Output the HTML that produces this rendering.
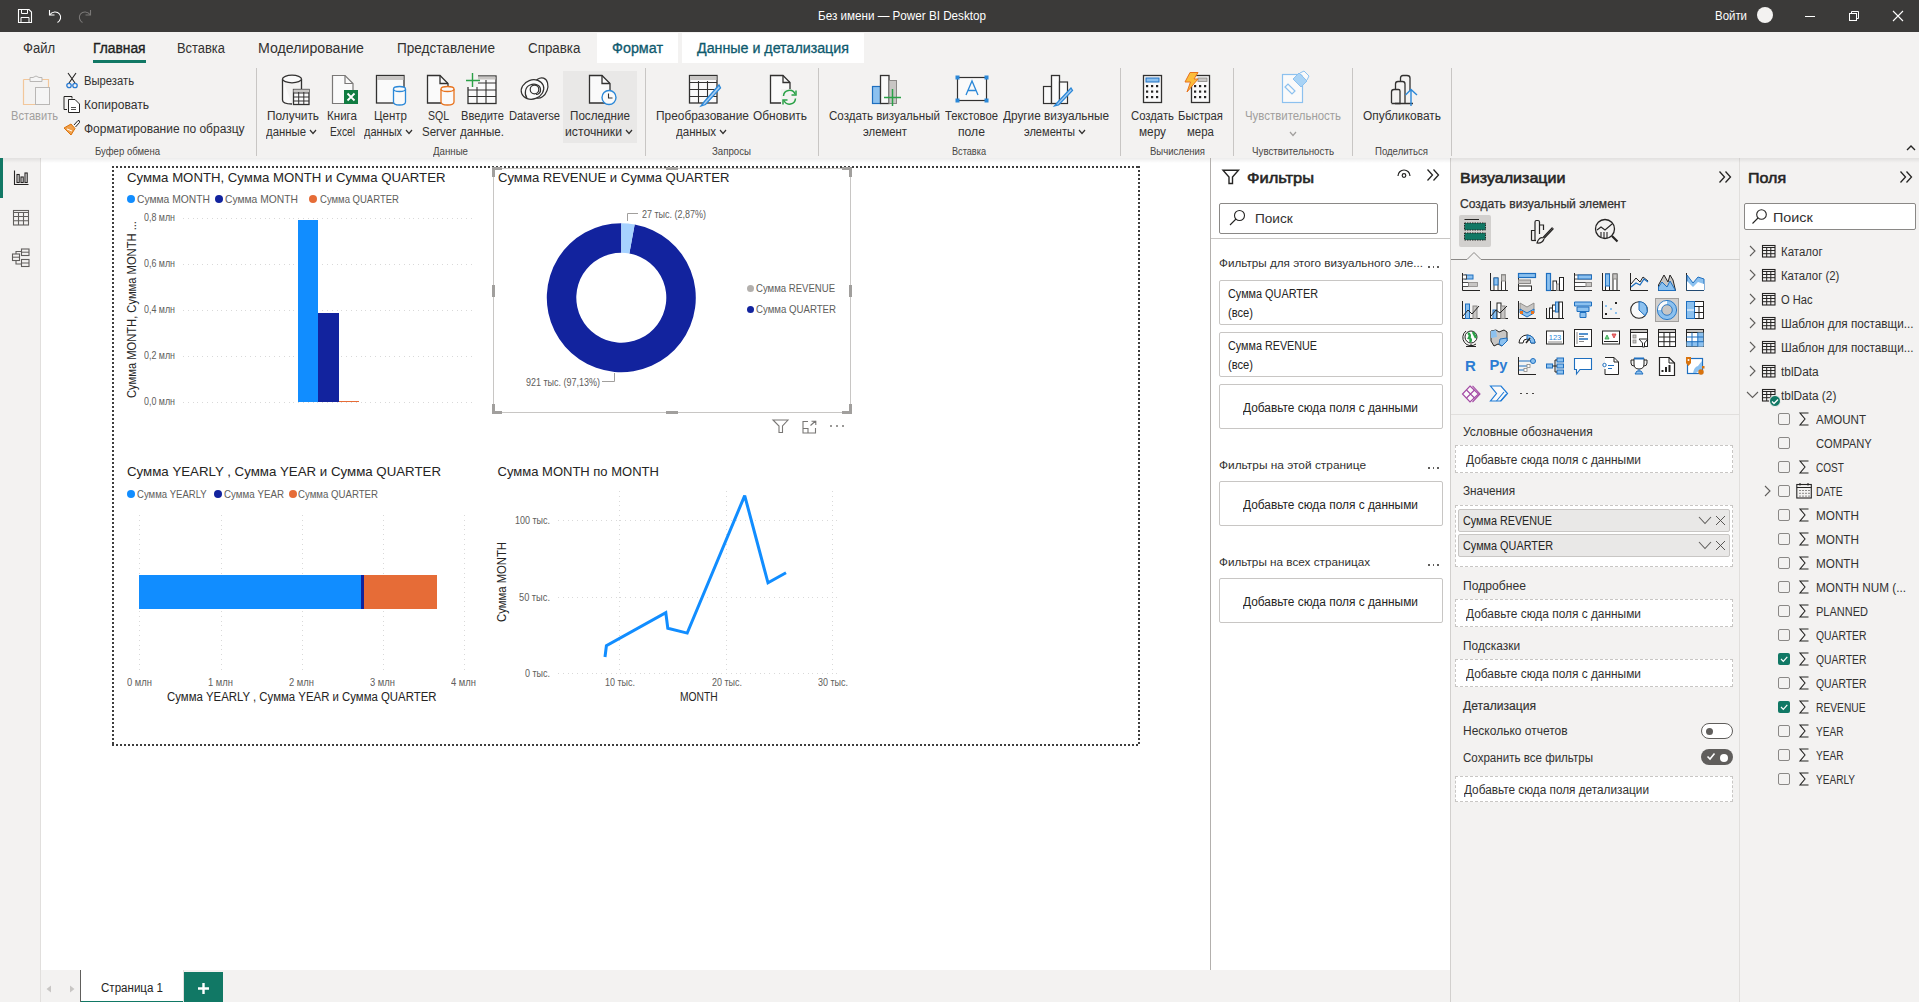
<!DOCTYPE html><html><head><meta charset="utf-8"><style>
html,body{margin:0;padding:0;width:1919px;height:1002px;overflow:hidden;background:#f3f2f1;}
body{position:relative;font-family:"Liberation Sans",sans-serif;}
.t{position:absolute;white-space:nowrap;line-height:1;transform-origin:0 0;}
.r{position:absolute;box-sizing:border-box;}
.s{position:absolute;overflow:visible;}
</style></head><body>
<div class="r" style="left:0px;top:0px;width:1919px;height:32px;background:#3b3a39;"></div>
<svg class="s" style="left:17px;top:8px;" width="16" height="16" viewBox="0 0 16 16"><path d="M1.5,1.5 H12 L14.5,4 V14.5 H1.5 Z" fill="none" stroke="#fff" stroke-width="1.1"/><path d="M4.5,1.5 V5.5 H10.5 V1.5" fill="none" stroke="#fff" stroke-width="1"/><path d="M4,14.5 V9.5 H12 V14.5" fill="none" stroke="#fff" stroke-width="1"/></svg>
<svg class="s" style="left:47px;top:8px;" width="16" height="16" viewBox="0 0 16 16"><path d="M2.5,2 V7 H7.5" fill="none" stroke="#fff" stroke-width="1.1"/><path d="M2.8,6.8 C5,3.5 10,3 12.5,6 C14.8,8.8 13.5,12.5 10.5,14.5" fill="none" stroke="#fff" stroke-width="1.1"/></svg>
<svg class="s" style="left:77px;top:8px;" width="16" height="16" viewBox="0 0 16 16"><path d="M13.5,2 V7 H8.5" fill="none" stroke="#7a7877" stroke-width="1.1"/><path d="M13.2,6.8 C11,3.5 6,3 3.5,6 C1.2,8.8 2.5,12.5 5.5,14.5" fill="none" stroke="#7a7877" stroke-width="1.1"/></svg>
<div class="t" style="left:818.00px;top:9px;font-size:13px;color:#ffffff;transform:scaleX(0.8972);">Без имени — Power BI Desktop</div>
<div class="t" style="left:1715.00px;top:9px;font-size:13px;color:#ffffff;transform:scaleX(0.8797);">Войти</div>
<div class="r" style="left:1757px;top:7px;width:16px;height:16px;border-radius:50%;background:#f3f2f1"></div>
<div class="r" style="left:1805px;top:16px;width:10px;height:1px;background:#ffffff;"></div>
<svg class="s" style="left:1848px;top:10px;" width="12" height="12" viewBox="0 0 12 12"><rect x="1.5" y="3.5" width="7" height="7" fill="none" stroke="#fff" stroke-width="1"/><path d="M3.5,3.5 V1.5 H10.5 V8.5 H8.5" fill="none" stroke="#fff" stroke-width="1"/></svg>
<svg class="s" style="left:1892px;top:10px;" width="12" height="12" viewBox="0 0 12 12"><path d="M1,1 L11,11 M11,1 L1,11" stroke="#fff" stroke-width="1.1"/></svg>
<div class="r" style="left:597px;top:33px;width:81px;height:30px;background:#ffffff;"></div>
<div class="r" style="left:682px;top:33px;width:182px;height:30px;background:#ffffff;"></div>
<div class="t" style="left:23.00px;top:41px;font-size:14px;color:#323130;transform:scaleX(0.9309);">Файл</div>
<div class="t" style="left:93.00px;top:41px;font-size:14px;color:#201f1e;transform:scaleX(0.9859);-webkit-text-stroke:0.35px #201f1e;">Главная</div>
<div class="t" style="left:177.00px;top:41px;font-size:14px;color:#323130;transform:scaleX(0.9209);">Вставка</div>
<div class="t" style="left:258.00px;top:41px;font-size:14px;color:#323130;transform:scaleX(1.0119);">Моделирование</div>
<div class="t" style="left:397.00px;top:41px;font-size:14px;color:#323130;transform:scaleX(0.9703);">Представление</div>
<div class="t" style="left:527.50px;top:41px;font-size:14px;color:#323130;transform:scaleX(0.9545);">Справка</div>
<div class="t" style="left:612.00px;top:41px;font-size:14px;color:#0e5a6e;transform:scaleX(1.0251);-webkit-text-stroke:0.3px #0e5a6e;">Формат</div>
<div class="t" style="left:697.00px;top:41px;font-size:14px;color:#0e5a6e;transform:scaleX(1.0176);-webkit-text-stroke:0.3px #0e5a6e;">Данные и детализация</div>
<div class="r" style="left:93px;top:60px;width:53px;height:3px;background:#117865;"></div>
<div class="r" style="left:0;top:158px;width:1919px;height:5px;background:linear-gradient(rgba(0,0,0,0.075),rgba(0,0,0,0));z-index:5"></div>
<div class="r" style="left:256px;top:68px;width:1px;height:88px;background:#c8c6c4;"></div>
<div class="r" style="left:645px;top:68px;width:1px;height:88px;background:#c8c6c4;"></div>
<div class="r" style="left:818px;top:68px;width:1px;height:88px;background:#c8c6c4;"></div>
<div class="r" style="left:1120px;top:68px;width:1px;height:88px;background:#c8c6c4;"></div>
<div class="r" style="left:1233px;top:68px;width:1px;height:88px;background:#c8c6c4;"></div>
<div class="r" style="left:1352px;top:68px;width:1px;height:88px;background:#c8c6c4;"></div>
<div class="r" style="left:1451px;top:68px;width:1px;height:88px;background:#c8c6c4;"></div>
<svg class="s" style="left:22px;top:74px;" width="30" height="32" viewBox="0 0 30 32"><path d="M1.5,5.5 H8 M20,5.5 H26.5 V19" fill="none" stroke="#f2c79b" stroke-width="1.2"/><path d="M1.5,5.5 V30.5 H14" fill="none" stroke="#f2c79b" stroke-width="1.2"/><path d="M8,7.5 V3.5 H11 Q14,0.5 17,3.5 H20 V7.5 Z" fill="#f5f5f5" stroke="#b9b7b5" stroke-width="1"/><rect x="13.5" y="13.5" width="14" height="17" fill="#f5f5f5" stroke="#b9b7b5" stroke-width="1"/></svg>
<div class="t" style="left:10.50px;top:110px;font-size:12px;color:#a19f9d;transform:scaleX(0.9238);">Вставить</div>
<svg class="s" style="left:66px;top:72px;" width="12" height="17" viewBox="0 0 12 17"><path d="M2,1 L9,11 M10,1 L3,11" stroke="#252423" stroke-width="1.1"/><circle cx="3" cy="13.5" r="2.2" fill="none" stroke="#2b7cd3" stroke-width="1.3"/><circle cx="9" cy="13.5" r="2.2" fill="none" stroke="#2b7cd3" stroke-width="1.3"/></svg>
<div class="t" style="left:84.00px;top:75px;font-size:12px;color:#323130;transform:scaleX(0.9368);">Вырезать</div>
<svg class="s" style="left:63px;top:96px;" width="18" height="17" viewBox="0 0 18 17"><path d="M9,2.5 V0.5 H1 V13.5 H4" fill="none" stroke="#252423" stroke-width="1"/><path d="M5.5,3.5 H12 L16.5,8 V16.5 H5.5 Z" fill="#fff" stroke="#252423" stroke-width="1"/><path d="M8,11.5 H13 M8,13.5 H13" stroke="#252423" stroke-width="0.8"/></svg>
<div class="t" style="left:84.00px;top:99px;font-size:12px;color:#323130;transform:scaleX(1.0058);">Копировать</div>
<svg class="s" style="left:63px;top:119px;" width="18" height="17" viewBox="0 0 18 17"><path d="M11,6 L15,1.5 Q17,1 16.5,3.5 L12.5,8" fill="none" stroke="#252423" stroke-width="1"/><path d="M1,9 L8,5 L12,9.5 L8,16 Z" fill="#f0a04b" stroke="#d9730d" stroke-width="1"/><path d="M4,10 L9,12" stroke="#fff" stroke-width="1"/></svg>
<div class="t" style="left:84.00px;top:123px;font-size:12px;color:#323130;">Форматирование по образцу</div>
<div class="t" style="left:95.00px;top:146px;font-size:11px;color:#484644;transform:scaleX(0.8696);">Буфер обмена</div>
<svg class="s" style="left:281px;top:74px;" width="30" height="32" viewBox="0 0 30 32"><path d="M1.5,5 V26 Q1.5,30 11,30 M20.5,5 V16" fill="#fafafa" stroke="#323130" stroke-width="1.3"/><ellipse cx="11" cy="5" rx="9.5" ry="3.8" fill="#fafafa" stroke="#323130" stroke-width="1.3"/><rect x="12.5" y="15.5" width="15.5" height="15" fill="#fafafa" stroke="#323130" stroke-width="1.3"/><rect x="12.5" y="15.5" width="15.5" height="3" fill="#c8c6c4"/><path d="M12.5,19 H28 M12.5,23 H28 M12.5,27 H28 M17.7,18 V30.5 M22.8,18 V30.5" stroke="#323130" stroke-width="1"/></svg>
<div class="t" style="left:267.00px;top:110px;font-size:12px;color:#323130;transform:scaleX(0.9858);">Получить</div>
<div class="t" style="left:266.00px;top:126px;font-size:12px;color:#323130;transform:scaleX(0.9467);">данные</div>
<svg class="s" style="left:309px;top:129px;" width="8" height="5.5" viewBox="0 0 8 5.5"><polyline points="1,1 4.0,4.5 7,1" fill="none" stroke="#323130" stroke-width="1.2"/></svg>
<svg class="s" style="left:331px;top:74px;" width="30" height="32" viewBox="0 0 30 32"><path d="M1.5,1.5 H14 L22,9.5 V29.5 H1.5 Z" fill="#fafafa" stroke="#7a7877" stroke-width="1.2"/><path d="M14,1.5 V9.5 H22" fill="none" stroke="#7a7877" stroke-width="1.2"/><rect x="13" y="16" width="14" height="14" fill="#107c41"/><path d="M16.5,19.5 L23.5,26.5 M23.5,19.5 L16.5,26.5" stroke="#fff" stroke-width="1.8"/></svg>
<div class="t" style="left:327.00px;top:110px;font-size:12px;color:#323130;transform:scaleX(0.9639);">Книга</div>
<div class="t" style="left:330.00px;top:126px;font-size:12px;color:#323130;transform:scaleX(0.8511);">Excel</div>
<svg class="s" style="left:375px;top:74px;" width="33" height="32" viewBox="0 0 33 32"><rect x="1.5" y="1.5" width="27.5" height="27.5" fill="#fafafa" stroke="#323130" stroke-width="1.3"/><rect x="2" y="2" width="26.5" height="4" fill="#c8c6c4"/><path d="M18.5,15 V28 Q18.5,31 24.5,31 Q30.5,31 30.5,28 V15" fill="#fafafa" stroke="#2b88d8" stroke-width="1.3"/><ellipse cx="24.5" cy="15" rx="6" ry="2.5" fill="#fafafa" stroke="#2b88d8" stroke-width="1.3"/></svg>
<div class="t" style="left:374.00px;top:110px;font-size:12px;color:#323130;transform:scaleX(0.9600);">Центр</div>
<div class="t" style="left:364.00px;top:126px;font-size:12px;color:#323130;transform:scaleX(0.9157);">данных</div>
<svg class="s" style="left:405px;top:129px;" width="8" height="5.5" viewBox="0 0 8 5.5"><polyline points="1,1 4.0,4.5 7,1" fill="none" stroke="#323130" stroke-width="1.2"/></svg>
<svg class="s" style="left:426px;top:74px;" width="30" height="32" viewBox="0 0 30 32"><path d="M1.5,1.5 H14 L22,9.5 V29 H1.5 Z" fill="#fafafa" stroke="#323130" stroke-width="1.3"/><path d="M14,1.5 V9.5 H22" fill="none" stroke="#323130" stroke-width="1.3"/><path d="M15,15 V28 Q15,31 21.5,31 Q28,31 28,28 V15" fill="#fafafa" stroke="#e8731e" stroke-width="1.3"/><ellipse cx="21.5" cy="15" rx="6.5" ry="2.5" fill="#fafafa" stroke="#e8731e" stroke-width="1.3"/></svg>
<div class="t" style="left:428.00px;top:110px;font-size:12px;color:#323130;transform:scaleX(0.8750);">SQL</div>
<div class="t" style="left:422.00px;top:126px;font-size:12px;color:#323130;transform:scaleX(0.9611);">Server</div>
<svg class="s" style="left:465px;top:72px;" width="33" height="34" viewBox="0 0 33 34"><rect x="3" y="4" width="28" height="27.5" fill="#fafafa" stroke="#323130" stroke-width="1.3"/><rect x="11" y="4.5" width="19.5" height="3" fill="#c8c6c4"/><path d="M3,11 H31 M3,18 H31 M3,24.5 H31 M12,8 V31.5 M21,8 V31.5" stroke="#323130" stroke-width="1.1"/><rect x="0" y="0" width="13" height="15" fill="#f3f2f1"/><path d="M7.5,1 V15 M1,8.5 H15" stroke="#2aa147" stroke-width="1.4"/></svg>
<div class="t" style="left:461.00px;top:110px;font-size:12px;color:#323130;transform:scaleX(0.9272);">Введите</div>
<div class="t" style="left:460.00px;top:126px;font-size:12px;color:#323130;transform:scaleX(0.9644);">данные.</div>
<svg class="s" style="left:520px;top:77px;" width="30" height="24" viewBox="0 0 30 24"><g fill="#fafafa" stroke="#323130" stroke-width="1.2"><ellipse cx="20" cy="11" rx="7.5" ry="10.5" transform="rotate(20 20 11)"/><ellipse cx="12.5" cy="12.5" rx="11.5" ry="9.5" transform="rotate(-20 12.5 12.5)"/><path d="M7,21 C4,17 5,10 10,8 C15,6 20,8 20.5,12 C21,15.5 18.5,17.5 16,17.5" fill="none"/><circle cx="14.5" cy="12.5" r="4.3"/></g></svg>
<div class="t" style="left:509.00px;top:110px;font-size:12px;color:#323130;transform:scaleX(0.9315);">Dataverse</div>
<div class="r" style="left:563px;top:71px;width:74px;height:72px;background:#e9e8e7;"></div>
<svg class="s" style="left:588px;top:74px;" width="30" height="32" viewBox="0 0 30 32"><path d="M1.5,1.5 H14 L22,9.5 V29 H1.5 Z" fill="#fafafa" stroke="#323130" stroke-width="1.3"/><path d="M14,1.5 V9.5 H22" fill="none" stroke="#323130" stroke-width="1.3"/><circle cx="21" cy="23.5" r="7" fill="#fafafa" stroke="#2b88d8" stroke-width="1.4"/><path d="M20.5,19.5 V24 H24.5" fill="none" stroke="#323130" stroke-width="1.1"/></svg>
<div class="t" style="left:570.00px;top:110px;font-size:12px;color:#323130;transform:scaleX(0.9717);">Последние</div>
<div class="t" style="left:565.00px;top:126px;font-size:12px;color:#323130;transform:scaleX(1.0179);">источники</div>
<svg class="s" style="left:625px;top:129px;" width="8" height="5.5" viewBox="0 0 8 5.5"><polyline points="1,1 4.0,4.5 7,1" fill="none" stroke="#323130" stroke-width="1.2"/></svg>
<div class="t" style="left:433.00px;top:146px;font-size:11px;color:#484644;transform:scaleX(0.8805);">Данные</div>
<svg class="s" style="left:688px;top:74px;" width="33" height="33" viewBox="0 0 33 33"><rect x="1.5" y="1.5" width="27.5" height="27.5" fill="#fafafa" stroke="#323130" stroke-width="1.3"/><rect x="2" y="2" width="26.5" height="4" fill="#c8c6c4"/><path d="M1.5,8.5 H29 M1.5,15.5 H29 M1.5,22.5 H29 M10.5,7 V29 M19.5,7 V29" stroke="#323130" stroke-width="1.1"/><path d="M31,11 L16,28 L13,32 L17.5,30.5 L32.5,14 Z" fill="#a9cdf0" stroke="#2b88d8" stroke-width="1.3"/></svg>
<div class="t" style="left:656.00px;top:110px;font-size:12px;color:#323130;transform:scaleX(0.9920);">Преобразование</div>
<div class="t" style="left:676.00px;top:126px;font-size:12px;color:#323130;transform:scaleX(0.9639);">данных</div>
<svg class="s" style="left:719px;top:129px;" width="8" height="5.5" viewBox="0 0 8 5.5"><polyline points="1,1 4.0,4.5 7,1" fill="none" stroke="#323130" stroke-width="1.2"/></svg>
<svg class="s" style="left:769px;top:74px;" width="30" height="32" viewBox="0 0 30 32"><path d="M1.5,1.5 H14 L21,8.5 V29 H1.5 Z" fill="#fafafa" stroke="#323130" stroke-width="1.3"/><path d="M14,1.5 V8.5 H21" fill="none" stroke="#323130" stroke-width="1.3"/><rect x="12" y="15" width="16" height="17" fill="#f3f2f1"/><path d="M14.5,22 A6,6 0 0 1 26,20 M26.5,24.5 A6,6 0 0 1 15,26.5" fill="none" stroke="#2aa147" stroke-width="1.5"/><path d="M27,16.5 V21 H22.5 M14,30.5 V26 H18.5" fill="none" stroke="#2aa147" stroke-width="1.5"/></svg>
<div class="t" style="left:753.00px;top:110px;font-size:12px;color:#323130;transform:scaleX(0.9931);">Обновить</div>
<div class="t" style="left:712.00px;top:146px;font-size:11px;color:#484644;transform:scaleX(0.8789);">Запросы</div>
<svg class="s" style="left:871px;top:74px;" width="32" height="33" viewBox="0 0 32 33"><rect x="1.5" y="12.5" width="8" height="17" fill="#8cc1ef" stroke="#1e6fbf" stroke-width="1.2"/><rect x="9.5" y="1.5" width="8.5" height="28" fill="#fafafa" stroke="#323130" stroke-width="1.3"/><rect x="18" y="6.5" width="7.5" height="23" fill="#c8c6c4" stroke="#8a8886" stroke-width="1"/><path d="M21.5,15 V32 M13,23.5 H30" stroke="#2aa147" stroke-width="1.5"/></svg>
<div class="t" style="left:829.00px;top:110px;font-size:12px;color:#323130;transform:scaleX(0.9642);">Создать визуальный</div>
<div class="t" style="left:863.00px;top:126px;font-size:12px;color:#323130;transform:scaleX(0.9437);">элемент</div>
<svg class="s" style="left:955px;top:75px;" width="34" height="28" viewBox="0 0 34 28"><rect x="2.5" y="2.5" width="29" height="23" fill="#fafafa" stroke="#323130" stroke-width="1.2"/><rect x="0.5" y="0.5" width="4" height="4" fill="#2b88d8"/><rect x="29.5" y="0.5" width="4" height="4" fill="#2b88d8"/><rect x="0.5" y="23.5" width="4" height="4" fill="#2b88d8"/><rect x="29.5" y="23.5" width="4" height="4" fill="#2b88d8"/><path d="M11,20 L17,6 L23,20 M13,15.5 H21" fill="none" stroke="#2b88d8" stroke-width="1.3"/></svg>
<div class="t" style="left:945.00px;top:110px;font-size:12px;color:#323130;transform:scaleX(0.9401);">Текстовое</div>
<div class="t" style="left:958.00px;top:126px;font-size:12px;color:#323130;transform:scaleX(1.0141);">поле</div>
<div class="t" style="left:952.00px;top:146px;font-size:11px;color:#484644;transform:scaleX(0.8318);">Вставка</div>
<svg class="s" style="left:1042px;top:74px;" width="32" height="33" viewBox="0 0 32 33"><rect x="1.5" y="12.5" width="8" height="17" fill="#fafafa" stroke="#323130" stroke-width="1.2"/><rect x="9.5" y="1.5" width="8" height="28" fill="#fafafa" stroke="#323130" stroke-width="1.3"/><rect x="17.5" y="8" width="8" height="21.5" fill="#fafafa" stroke="#323130" stroke-width="1.2"/><path d="M29,14 L15,29 L12.5,32 L16.5,31 L30.5,16.5 Z" fill="#a9cdf0" stroke="#2b88d8" stroke-width="1.3"/></svg>
<div class="t" style="left:1003.00px;top:110px;font-size:12px;color:#323130;transform:scaleX(0.9826);">Другие визуальные</div>
<div class="t" style="left:1024.00px;top:126px;font-size:12px;color:#323130;transform:scaleX(0.9231);">элементы</div>
<svg class="s" style="left:1078px;top:129px;" width="8" height="5.5" viewBox="0 0 8 5.5"><polyline points="1,1 4.0,4.5 7,1" fill="none" stroke="#323130" stroke-width="1.2"/></svg>
<svg class="s" style="left:1142px;top:74px;" width="21" height="30" viewBox="0 0 21 30"><rect x="1.5" y="1.5" width="18" height="27" fill="#fafafa" stroke="#323130" stroke-width="1.3"/><rect x="4" y="4" width="13" height="4" fill="#8cc1ef" stroke="#1e6fbf" stroke-width="1"/><rect x="4" y="11.0" width="2.2" height="2.2" fill="#252423"/><rect x="4" y="16.5" width="2.2" height="2.2" fill="#252423"/><rect x="4" y="22.0" width="2.2" height="2.2" fill="#252423"/><rect x="9" y="11.0" width="2.2" height="2.2" fill="#252423"/><rect x="9" y="16.5" width="2.2" height="2.2" fill="#252423"/><rect x="9" y="22.0" width="2.2" height="2.2" fill="#252423"/><rect x="14" y="11.0" width="2.2" height="2.2" fill="#252423"/><rect x="14" y="16.5" width="2.2" height="2.2" fill="#252423"/><rect x="14" y="22.0" width="2.2" height="2.2" fill="#252423"/></svg>
<div class="t" style="left:1131.00px;top:110px;font-size:12px;color:#323130;transform:scaleX(0.9425);">Создать</div>
<div class="t" style="left:1139.00px;top:126px;font-size:12px;color:#323130;transform:scaleX(0.9818);">меру</div>
<svg class="s" style="left:1184px;top:72px;" width="28" height="33" viewBox="0 0 28 33"><rect x="7.5" y="3.5" width="18" height="27" fill="#fafafa" stroke="#323130" stroke-width="1.3"/><rect x="14" y="6" width="9" height="3.5" fill="#c8c6c4" stroke="#8a8886" stroke-width="0.8"/><rect x="10" y="13.0" width="2.2" height="2.2" fill="#252423"/><rect x="10" y="18.5" width="2.2" height="2.2" fill="#252423"/><rect x="10" y="24.0" width="2.2" height="2.2" fill="#252423"/><rect x="15" y="13.0" width="2.2" height="2.2" fill="#252423"/><rect x="15" y="18.5" width="2.2" height="2.2" fill="#252423"/><rect x="15" y="24.0" width="2.2" height="2.2" fill="#252423"/><rect x="20" y="13.0" width="2.2" height="2.2" fill="#252423"/><rect x="20" y="18.5" width="2.2" height="2.2" fill="#252423"/><rect x="20" y="24.0" width="2.2" height="2.2" fill="#252423"/><path d="M6,0.5 H14 L10,7 H14 L3,20 L6.5,10 H1 Z" fill="#fbbd3b" stroke="#e8731e" stroke-width="1"/></svg>
<div class="t" style="left:1178.00px;top:110px;font-size:12px;color:#323130;transform:scaleX(0.9399);">Быстрая</div>
<div class="t" style="left:1187.00px;top:126px;font-size:12px;color:#323130;transform:scaleX(0.9515);">мера</div>
<div class="t" style="left:1150.00px;top:146px;font-size:11px;color:#484644;transform:scaleX(0.8679);">Вычисления</div>
<svg class="s" style="left:1281px;top:72px;" width="30" height="33" viewBox="0 0 30 33"><rect x="1.5" y="2.5" width="20" height="28" fill="#fafafa" stroke="#8cc1ef" stroke-width="1.2"/><path d="M4,15 L11,22 L14,19 L7,12 Z" fill="#fafafa" stroke="#8cc1ef" stroke-width="1.2"/><path d="M12,7 L18,1 L26,9 L20,15 Z" fill="#a9d3f5" stroke="#8cc1ef" stroke-width="1"/><path d="M19,1 L23,-1 L28,4 L26,8" fill="#fafafa" stroke="#8cc1ef" stroke-width="1"/></svg>
<div class="t" style="left:1245.00px;top:110px;font-size:12px;color:#a19f9d;transform:scaleX(0.9529);">Чувствительность</div>
<svg class="s" style="left:1289px;top:131px;" width="8" height="5.5" viewBox="0 0 8 5.5"><polyline points="1,1 4.0,4.5 7,1" fill="none" stroke="#a19f9d" stroke-width="1.2"/></svg>
<div class="t" style="left:1252.00px;top:146px;font-size:11px;color:#484644;transform:scaleX(0.8877);">Чувствительность</div>
<svg class="s" style="left:1390px;top:74px;" width="30" height="33" viewBox="0 0 30 33"><path d="M1.5,29 V18 Q1.5,15.5 4,15.5 H8.5 Q10,15.5 10,17 M5,29.5 H23" fill="none" stroke="#323130" stroke-width="1.3"/><path d="M1.5,29.5 H10 V17" fill="none" stroke="#323130" stroke-width="1.3"/><path d="M5.5,15.5 V10 Q5.5,7.5 8,7.5 H12.5 Q15,7.5 15,10 V29.5" fill="none" stroke="#323130" stroke-width="1.3"/><path d="M10.5,7.5 V4 Q10.5,1.5 13,1.5 H17 Q20,1.5 20,4 V17" fill="none" stroke="#323130" stroke-width="1.3"/><path d="M21,32 V16 M15.5,21 L21,15.5 L27,21" fill="none" stroke="#2b88d8" stroke-width="1.4"/></svg>
<div class="t" style="left:1363.00px;top:110px;font-size:12px;color:#323130;transform:scaleX(0.9936);">Опубликовать</div>
<div class="t" style="left:1375.00px;top:146px;font-size:11px;color:#484644;transform:scaleX(0.8724);">Поделиться</div>
<svg class="s" style="left:1906px;top:144px;" width="10" height="7" viewBox="0 0 10 7"><polyline points="1,6 5,2 9,6" fill="none" stroke="#252423" stroke-width="1.4"/></svg>
<div class="r" style="left:0px;top:158px;width:40px;height:844px;background:#f3f2f1;"></div>
<div class="r" style="left:40px;top:158px;width:1px;height:844px;background:#e1dfdd;"></div>
<div class="r" style="left:0px;top:158px;width:3px;height:40px;background:#117865;z-index:6;"></div>
<svg class="s" style="left:13px;top:170px;" width="16" height="16" viewBox="0 0 16 16"><path d="M1.5,0.5 V14.5 H15.5" fill="none" stroke="#252423" stroke-width="1.1"/><rect x="4" y="4.5" width="2.2" height="8" fill="none" stroke="#252423" stroke-width="1.1"/><rect x="8" y="7" width="2.2" height="5.5" fill="none" stroke="#252423" stroke-width="1.1"/><rect x="12" y="3" width="2.2" height="9.5" fill="none" stroke="#252423" stroke-width="1.1"/></svg>
<svg class="s" style="left:12px;top:209px;" width="18" height="18" viewBox="0 0 18 18"><rect x="1.5" y="1.5" width="15" height="14.5" fill="none" stroke="#605e5c" stroke-width="1.1"/><path d="M1.5,3.5 H16.5 M1.5,7.5 H16.5 M1.5,11.8 H16.5 M6.5,3.5 V16 M11.5,3.5 V16" stroke="#605e5c" stroke-width="1.1"/></svg>
<svg class="s" style="left:11px;top:248px;" width="20" height="20" viewBox="0 0 20 20"><rect x="1.5" y="6" width="7" height="6.5" fill="none" stroke="#605e5c" stroke-width="1.1"/><path d="M1.5,9.2 H8.5" stroke="#605e5c" stroke-width="1"/><rect x="10.5" y="1" width="7.5" height="6.5" fill="none" stroke="#605e5c" stroke-width="1.1"/><path d="M10.5,4.2 H18" stroke="#605e5c" stroke-width="1"/><rect x="10.5" y="11.5" width="7.5" height="7" fill="none" stroke="#605e5c" stroke-width="1.1"/><path d="M10.5,15 H18" stroke="#605e5c" stroke-width="1"/><path d="M5,6 V3.5 H10.5 M5,12.5 V16 H10.5" fill="none" stroke="#605e5c" stroke-width="1.1"/></svg>
<div class="r" style="left:41px;top:158px;width:1169px;height:812px;background:#ffffff;"></div>
<div class="r" style="left:41px;top:970px;width:1169px;height:32px;background:#f3f2f1;"></div>
<svg class="s" style="left:45px;top:985px;" width="8" height="8" viewBox="0 0 8 8"><path d="M6,0.5 L1.5,4 L6,7.5 Z" fill="#c8c6c4"/></svg>
<svg class="s" style="left:68px;top:985px;" width="8" height="8" viewBox="0 0 8 8"><path d="M2,0.5 L6.5,4 L2,7.5 Z" fill="#c8c6c4"/></svg>
<div class="r" style="left:80px;top:970px;width:104px;height:32px;background:#ffffff;border-left:1px solid #605e5c;"></div>
<div class="r" style="left:81px;top:1001px;width:103px;height:1px;background:#117865;"></div>
<div class="r" style="left:183px;top:970px;width:1px;height:32px;background:#e1dfdd;"></div>
<div class="t" style="left:101.00px;top:982px;font-size:12px;color:#252423;transform:scaleX(0.9631);">Страница 1</div>
<div class="r" style="left:184px;top:972px;width:39px;height:30px;background:#117865;"></div>
<svg class="s" style="left:197px;top:982px;" width="13" height="13" viewBox="0 0 13 13"><path d="M6.5,1 V12 M1,6.5 H12" stroke="#fff" stroke-width="2.4"/></svg>
<div class="r" style="left:112px;top:166px;width:1028px;height:2px;background:repeating-linear-gradient(90deg,#3d3d3d 0 2px,transparent 2px 4px)"></div>
<div class="r" style="left:112px;top:744px;width:1028px;height:2px;background:repeating-linear-gradient(90deg,#3d3d3d 0 2px,transparent 2px 4px)"></div>
<div class="r" style="left:112px;top:166px;width:2px;height:580px;background:repeating-linear-gradient(180deg,#3d3d3d 0 2px,transparent 2px 4px)"></div>
<div class="r" style="left:1138px;top:166px;width:2px;height:580px;background:repeating-linear-gradient(180deg,#3d3d3d 0 2px,transparent 2px 4px)"></div>
<div class="t" style="left:126.50px;top:171px;font-size:13px;color:#252423;transform:scaleX(1.0151);">Сумма MONTH, Сумма MONTH и Сумма QUARTER</div>
<div class="r" style="left:127px;top:195px;width:8px;height:8px;border-radius:50%;background:#118dff"></div>
<div class="t" style="left:137.00px;top:194px;font-size:11px;color:#605e5c;transform:scaleX(0.9359);">Сумма MONTH</div>
<div class="r" style="left:215px;top:195px;width:8px;height:8px;border-radius:50%;background:#12239e"></div>
<div class="t" style="left:225.00px;top:194px;font-size:11px;color:#605e5c;transform:scaleX(0.9359);">Сумма MONTH</div>
<div class="r" style="left:309px;top:195px;width:8px;height:8px;border-radius:50%;background:#e66c37"></div>
<div class="t" style="left:320.00px;top:194px;font-size:11px;color:#605e5c;transform:scaleX(0.8658);">Сумма QUARTER</div>
<div class="t" style="left:144.00px;top:213px;font-size:10px;color:#605e5c;transform:scaleX(0.8889);">0,8 млн</div>
<div class="r" style="left:183px;top:218px;width:291px;height:1px;background:repeating-linear-gradient(90deg,#d9d9d9 0 1px,transparent 1px 4.8px)"></div>
<div class="t" style="left:144.00px;top:259px;font-size:10px;color:#605e5c;transform:scaleX(0.8889);">0,6 млн</div>
<div class="r" style="left:183px;top:264px;width:291px;height:1px;background:repeating-linear-gradient(90deg,#d9d9d9 0 1px,transparent 1px 4.8px)"></div>
<div class="t" style="left:144.00px;top:305px;font-size:10px;color:#605e5c;transform:scaleX(0.8889);">0,4 млн</div>
<div class="r" style="left:183px;top:310px;width:291px;height:1px;background:repeating-linear-gradient(90deg,#d9d9d9 0 1px,transparent 1px 4.8px)"></div>
<div class="t" style="left:144.00px;top:351px;font-size:10px;color:#605e5c;transform:scaleX(0.8889);">0,2 млн</div>
<div class="r" style="left:183px;top:356px;width:291px;height:1px;background:repeating-linear-gradient(90deg,#d9d9d9 0 1px,transparent 1px 4.8px)"></div>
<div class="t" style="left:144.00px;top:397px;font-size:10px;color:#605e5c;transform:scaleX(0.8889);">0,0 млн</div>
<div class="r" style="left:183px;top:402px;width:291px;height:1px;background:repeating-linear-gradient(90deg,#d9d9d9 0 1px,transparent 1px 4.8px)"></div>
<div class="r" style="left:298px;top:220px;width:20px;height:182px;background:#118dff;"></div>
<div class="r" style="left:318px;top:313px;width:21px;height:89px;background:#12239e;"></div>
<div class="r" style="left:339px;top:400.5px;width:20px;height:1.5px;background:#e66c37;"></div>
<div class="t" style="left:126.09px;top:398.00px;font-size:12px;color:#252423;transform-origin:0 0;transform:rotate(-90deg) scaleX(0.9310);">Сумма MONTH, Сумма MONTH ...</div>
<div class="r" style="left:493px;top:168px;width:358px;height:245px;background:transparent;border:1px solid #c8c6c4;"></div>
<div class="r" style="left:492px;top:167px;width:10px;height:3px;background:#a19f9d;"></div>
<div class="r" style="left:492px;top:167px;width:3px;height:10px;background:#a19f9d;"></div>
<div class="r" style="left:842px;top:167px;width:10px;height:3px;background:#a19f9d;"></div>
<div class="r" style="left:849px;top:167px;width:3px;height:10px;background:#a19f9d;"></div>
<div class="r" style="left:492px;top:411px;width:10px;height:3px;background:#a19f9d;"></div>
<div class="r" style="left:492px;top:404px;width:3px;height:10px;background:#a19f9d;"></div>
<div class="r" style="left:842px;top:411px;width:10px;height:3px;background:#a19f9d;"></div>
<div class="r" style="left:849px;top:404px;width:3px;height:10px;background:#a19f9d;"></div>
<div class="r" style="left:666px;top:166.5px;width:12px;height:3px;background:#a19f9d;"></div>
<div class="r" style="left:666px;top:410.5px;width:12px;height:3px;background:#a19f9d;"></div>
<div class="r" style="left:491.5px;top:285px;width:3px;height:12px;background:#a19f9d;"></div>
<div class="r" style="left:848.5px;top:285px;width:3px;height:12px;background:#a19f9d;"></div>
<div class="t" style="left:497.50px;top:171px;font-size:13px;color:#252423;transform:scaleX(1.0082);">Сумма REVENUE и Сумма QUARTER</div>
<svg class="s" style="left:0;top:0" width="1919" height="1002"><path d="M634.66,224.41 A74.5,74.5 0 1 1 621.30,223.20 L621.30,252.70 A45,45 0 1 0 629.37,253.43 Z" fill="#12239e"/><path d="M621.30,223.20 A74.5,74.5 0 0 1 634.66,224.41 L629.37,253.43 A45,45 0 0 0 621.30,252.70 Z" fill="#a6d2ff"/><polyline points="627.5,221 627.5,213.5 638,213.5" fill="none" stroke="#a19f9d" stroke-width="1"/><polyline points="602,381.5 614.5,381.5 614.5,373" fill="none" stroke="#a19f9d" stroke-width="1"/></svg>
<div class="t" style="left:641.50px;top:210px;font-size:10px;color:#605e5c;transform:scaleX(0.8982);">27 тыс. (2,87%)</div>
<div class="t" style="left:526.30px;top:378px;font-size:10px;color:#605e5c;transform:scaleX(0.8983);">921 тыс. (97,13%)</div>
<div class="r" style="left:747.0px;top:285.0px;width:7.0px;height:7.0px;border-radius:50%;background:#b3b0ad"></div>
<div class="t" style="left:756.00px;top:283px;font-size:11px;color:#605e5c;transform:scaleX(0.8705);">Сумма REVENUE</div>
<div class="r" style="left:747.0px;top:306.0px;width:7.0px;height:7.0px;border-radius:50%;background:#12239e"></div>
<div class="t" style="left:756.00px;top:304px;font-size:11px;color:#605e5c;transform:scaleX(0.8767);">Сумма QUARTER</div>
<svg class="s" style="left:772px;top:419px;" width="18" height="15" viewBox="0 0 18 15"><path d="M1,1 H16 L10.5,7 V13.5 H7 V7 Z" fill="none" stroke="#797775" stroke-width="1.1"/></svg>
<svg class="s" style="left:802px;top:420px;" width="16" height="14" viewBox="0 0 16 14"><path d="M6,1.5 H1 V13 H13.5 V8" fill="none" stroke="#797775" stroke-width="1.1"/><path d="M1,8.5 H6 V13" fill="none" stroke="#797775" stroke-width="1.1"/><path d="M8.5,5.5 L13.5,1 M9.5,1.2 H13.8 V5" fill="none" stroke="#797775" stroke-width="1.1"/></svg>
<div class="r" style="left:829.8px;top:424.8px;width:2.4px;height:2.4px;border-radius:50%;background:#797775"></div>
<div class="r" style="left:835.8px;top:424.8px;width:2.4px;height:2.4px;border-radius:50%;background:#797775"></div>
<div class="r" style="left:841.8px;top:424.8px;width:2.4px;height:2.4px;border-radius:50%;background:#797775"></div>
<div class="t" style="left:126.50px;top:465px;font-size:13px;color:#252423;transform:scaleX(1.0211);">Сумма YEARLY , Сумма YEAR и Сумма QUARTER</div>
<div class="r" style="left:126.5px;top:490px;width:8px;height:8px;border-radius:50%;background:#118dff"></div>
<div class="t" style="left:136.70px;top:489px;font-size:11px;color:#605e5c;transform:scaleX(0.8685);">Сумма YEARLY</div>
<div class="r" style="left:213.5px;top:490px;width:8px;height:8px;border-radius:50%;background:#12239e"></div>
<div class="t" style="left:224.00px;top:489px;font-size:11px;color:#605e5c;transform:scaleX(0.8872);">Сумма YEAR</div>
<div class="r" style="left:288.5px;top:490px;width:8px;height:8px;border-radius:50%;background:#e66c37"></div>
<div class="t" style="left:298.00px;top:489px;font-size:11px;color:#605e5c;transform:scaleX(0.8767);">Сумма QUARTER</div>
<div class="r" style="left:139px;top:515px;width:1px;height:156px;background:repeating-linear-gradient(180deg,#d9d9d9 0 1px,transparent 1px 4.8px)"></div>
<div class="t" style="left:127.00px;top:678px;font-size:10px;color:#605e5c;transform:scaleX(0.9390);">0 млн</div>
<div class="r" style="left:221px;top:515px;width:1px;height:156px;background:repeating-linear-gradient(180deg,#d9d9d9 0 1px,transparent 1px 4.8px)"></div>
<div class="t" style="left:208.00px;top:678px;font-size:10px;color:#605e5c;transform:scaleX(0.9390);">1 млн</div>
<div class="r" style="left:302px;top:515px;width:1px;height:156px;background:repeating-linear-gradient(180deg,#d9d9d9 0 1px,transparent 1px 4.8px)"></div>
<div class="t" style="left:289.00px;top:678px;font-size:10px;color:#605e5c;transform:scaleX(0.9390);">2 млн</div>
<div class="r" style="left:383px;top:515px;width:1px;height:156px;background:repeating-linear-gradient(180deg,#d9d9d9 0 1px,transparent 1px 4.8px)"></div>
<div class="t" style="left:370.00px;top:678px;font-size:10px;color:#605e5c;transform:scaleX(0.9390);">3 млн</div>
<div class="r" style="left:464px;top:515px;width:1px;height:156px;background:repeating-linear-gradient(180deg,#d9d9d9 0 1px,transparent 1px 4.8px)"></div>
<div class="t" style="left:451.00px;top:678px;font-size:10px;color:#605e5c;transform:scaleX(0.9390);">4 млн</div>
<div class="r" style="left:139px;top:575px;width:223px;height:34px;background:#118dff;"></div>
<div class="r" style="left:361px;top:575px;width:2.5px;height:34px;background:#12239e;"></div>
<div class="r" style="left:363.5px;top:575px;width:73.5px;height:34px;background:#e66c37;"></div>
<div class="t" style="left:166.50px;top:691px;font-size:12px;color:#252423;transform:scaleX(0.9494);">Сумма YEARLY , Сумма YEAR и Сумма QUARTER</div>
<div class="t" style="left:497.60px;top:465px;font-size:13px;color:#252423;">Сумма MONTH по MONTH</div>
<div class="t" style="left:514.50px;top:516px;font-size:10px;color:#605e5c;transform:scaleX(0.8974);">100 тыс.</div>
<div class="r" style="left:558px;top:520px;width:281px;height:1px;background:repeating-linear-gradient(90deg,#d9d9d9 0 1px,transparent 1px 4.8px)"></div>
<div class="t" style="left:519.00px;top:593px;font-size:10px;color:#605e5c;transform:scaleX(0.9254);">50 тыс.</div>
<div class="r" style="left:558px;top:597px;width:281px;height:1px;background:repeating-linear-gradient(90deg,#d9d9d9 0 1px,transparent 1px 4.8px)"></div>
<div class="t" style="left:525.00px;top:669px;font-size:10px;color:#605e5c;transform:scaleX(0.8969);">0 тыс.</div>
<div class="r" style="left:558px;top:673px;width:281px;height:1px;background:repeating-linear-gradient(90deg,#d9d9d9 0 1px,transparent 1px 4.8px)"></div>
<div class="r" style="left:619px;top:491px;width:1px;height:182px;background:repeating-linear-gradient(180deg,#d9d9d9 0 1px,transparent 1px 4.8px)"></div>
<div class="r" style="left:726px;top:491px;width:1px;height:182px;background:repeating-linear-gradient(180deg,#d9d9d9 0 1px,transparent 1px 4.8px)"></div>
<div class="r" style="left:832px;top:491px;width:1px;height:182px;background:repeating-linear-gradient(180deg,#d9d9d9 0 1px,transparent 1px 4.8px)"></div>
<div class="t" style="left:605.00px;top:678px;font-size:10px;color:#605e5c;transform:scaleX(0.8955);">10 тыс.</div>
<div class="t" style="left:712.00px;top:678px;font-size:10px;color:#605e5c;transform:scaleX(0.8955);">20 тыс.</div>
<div class="t" style="left:818.00px;top:678px;font-size:10px;color:#605e5c;transform:scaleX(0.8955);">30 тыс.</div>
<div class="t" style="left:680.30px;top:691px;font-size:12px;color:#252423;transform:scaleX(0.8568);">MONTH</div>
<div class="t" style="left:496.09px;top:621.50px;font-size:12px;color:#252423;transform-origin:0 0;transform:rotate(-90deg) scaleX(0.9412);">Сумма MONTH</div>
<svg class="s" style="left:0;top:0" width="1919" height="1002"><polyline points="605,657 606.4,645.7 665.8,612.7 667.8,628.3 687.2,633.1 744.7,495.6 768,582.8 786,572.8" fill="none" stroke="#118dff" stroke-width="3" stroke-linejoin="miter" stroke-miterlimit="3"/></svg>
<div class="r" style="left:1210px;top:158px;width:1px;height:812px;background:#b3b0ad;z-index:6;"></div>
<div class="r" style="left:1211px;top:158px;width:239px;height:812px;background:#ffffff;"></div>
<div class="r" style="left:1450px;top:158px;width:1px;height:844px;background:#d2d0ce;"></div>
<svg class="s" style="left:1222px;top:169px;" width="18" height="16" viewBox="0 0 18 16"><path d="M1,1.2 H16.5 L10.5,8 V14.5 H7 V8 Z" fill="none" stroke="#252423" stroke-width="1.4"/></svg>
<div class="t" style="left:1247.00px;top:170px;font-size:15px;color:#252423;transform:scaleX(1.0961);-webkit-text-stroke:0.55px #252423;">Фильтры</div>
<svg class="s" style="left:1397px;top:168px;" width="14" height="11" viewBox="0 0 14 11"><path d="M1,8 A6,6 0 0 1 13,8" fill="none" stroke="#252423" stroke-width="1.2"/><circle cx="7" cy="7.5" r="1.8" fill="none" stroke="#252423" stroke-width="1.2"/></svg>
<svg class="s" style="left:1426px;top:168px;" width="15" height="14" viewBox="0 0 15 14"><polyline points="1.5,1.5 6.5,7 1.5,12.5" fill="none" stroke="#252423" stroke-width="1.3"/><polyline points="7.5,1.5 12.5,7 7.5,12.5" fill="none" stroke="#252423" stroke-width="1.3"/></svg>
<div class="r" style="left:1219px;top:203px;width:219px;height:31px;background:#ffffff;border:1px solid #8a8886;border-radius:2px;"></div>
<svg class="s" style="left:1229px;top:209px;" width="17" height="17" viewBox="0 0 17 17"><circle cx="10.5" cy="6.5" r="5" fill="none" stroke="#252423" stroke-width="1.1"/><path d="M7,10 L1,16" stroke="#252423" stroke-width="1.1"/></svg>
<div class="t" style="left:1255.00px;top:212px;font-size:13px;color:#323130;transform:scaleX(1.0483);">Поиск</div>
<div class="r" style="left:1211px;top:238px;width:239px;height:1px;background:#c8c6c4;"></div>
<div class="t" style="left:1219.00px;top:258px;font-size:11.5px;color:#323130;transform:scaleX(1.0168);">Фильтры для этого визуального эле...</div>
<div class="r" style="left:1428.0px;top:266px;width:1.5px;height:1.5px;background:#605e5c;"></div>
<div class="r" style="left:1432.5px;top:266px;width:1.5px;height:1.5px;background:#605e5c;"></div>
<div class="r" style="left:1437.0px;top:266px;width:1.5px;height:1.5px;background:#605e5c;"></div>
<div class="r" style="left:1219px;top:280px;width:224px;height:45px;background:#ffffff;border:1px solid #c8c6c4;border-radius:2px;"></div>
<div class="t" style="left:1228.00px;top:288px;font-size:12px;color:#252423;transform:scaleX(0.9045);">Сумма QUARTER</div>
<div class="t" style="left:1228.00px;top:307px;font-size:12px;color:#252423;transform:scaleX(0.9302);">(все)</div>
<div class="r" style="left:1219px;top:332px;width:224px;height:45px;background:#ffffff;border:1px solid #c8c6c4;border-radius:2px;"></div>
<div class="t" style="left:1228.00px;top:340px;font-size:12px;color:#252423;transform:scaleX(0.8990);">Сумма REVENUE</div>
<div class="t" style="left:1228.00px;top:359px;font-size:12px;color:#252423;transform:scaleX(0.9302);">(все)</div>
<div class="r" style="left:1219px;top:384px;width:224px;height:45px;background:#ffffff;border:1px solid #c8c6c4;border-radius:2px;"></div>
<div class="t" style="left:1243.00px;top:402px;font-size:12px;color:#252423;transform:scaleX(0.9908);">Добавьте сюда поля с данными</div>
<div class="t" style="left:1219.00px;top:460px;font-size:11.5px;color:#323130;transform:scaleX(1.0334);">Фильтры на этой странице</div>
<div class="r" style="left:1428.0px;top:467px;width:1.5px;height:1.5px;background:#605e5c;"></div>
<div class="r" style="left:1432.5px;top:467px;width:1.5px;height:1.5px;background:#605e5c;"></div>
<div class="r" style="left:1437.0px;top:467px;width:1.5px;height:1.5px;background:#605e5c;"></div>
<div class="r" style="left:1219px;top:481px;width:224px;height:45px;background:#ffffff;border:1px solid #c8c6c4;border-radius:2px;"></div>
<div class="t" style="left:1243.00px;top:499px;font-size:12px;color:#252423;transform:scaleX(0.9908);">Добавьте сюда поля с данными</div>
<div class="t" style="left:1219.00px;top:557px;font-size:11.5px;color:#323130;transform:scaleX(1.0194);">Фильтры на всех страницах</div>
<div class="r" style="left:1428.0px;top:564px;width:1.5px;height:1.5px;background:#605e5c;"></div>
<div class="r" style="left:1432.5px;top:564px;width:1.5px;height:1.5px;background:#605e5c;"></div>
<div class="r" style="left:1437.0px;top:564px;width:1.5px;height:1.5px;background:#605e5c;"></div>
<div class="r" style="left:1219px;top:578px;width:224px;height:45px;background:#ffffff;border:1px solid #c8c6c4;border-radius:2px;"></div>
<div class="t" style="left:1243.00px;top:596px;font-size:12px;color:#252423;transform:scaleX(0.9908);">Добавьте сюда поля с данными</div>
<div class="r" style="left:1451px;top:158px;width:288px;height:844px;background:#f3f2f1;"></div>
<div class="r" style="left:1739px;top:158px;width:1px;height:844px;background:#e1dfdd;"></div>
<div class="t" style="left:1459.50px;top:170px;font-size:15px;color:#252423;transform:scaleX(1.0711);-webkit-text-stroke:0.55px #252423;">Визуализации</div>
<svg class="s" style="left:1718px;top:170px;" width="15" height="14" viewBox="0 0 15 14"><polyline points="1.5,1.5 6.5,7 1.5,12.5" fill="none" stroke="#252423" stroke-width="1.3"/><polyline points="7.5,1.5 12.5,7 7.5,12.5" fill="none" stroke="#252423" stroke-width="1.3"/></svg>
<div class="t" style="left:1459.50px;top:198px;font-size:12px;color:#323130;transform:scaleX(1.0061);-webkit-text-stroke:0.25px #323130;">Создать визуальный элемент</div>
<div class="r" style="left:1459px;top:215px;width:32px;height:32px;background:#d2d0ce;border-radius:2px;"></div>
<svg class="s" style="left:1462px;top:218px;" width="26" height="26" viewBox="0 0 26 26"><path d="M2.5,1.5 H17" stroke="#252423" stroke-width="1"/><rect x="2.5" y="5" width="21" height="7" fill="#117865" stroke="#252423" stroke-width="1" stroke-dasharray="1.5 1"/><rect x="2.5" y="15" width="21" height="7" fill="#117865" stroke="#252423" stroke-width="1" stroke-dasharray="1.5 1"/></svg>
<svg class="s" style="left:1530px;top:219px;" width="25" height="25" viewBox="0 0 25 25"><path d="M1.5,21.5 V11.5 H5 M5,21.5 V3 Q5,1.5 6.5,1.5 H8 Q9.5,1.5 9.5,3 V15 M9.5,6 H13.5 V11" fill="none" stroke="#252423" stroke-width="1.2"/><path d="M1.5,21.5 H6" stroke="#252423" stroke-width="1.2"/><path d="M22.5,8.5 L13,18.5 M23.5,9.5 L14,19.5" stroke="#252423" stroke-width="1.1"/><path d="M13.5,19 Q9,17.5 7,24 Q12.5,24.5 14,20" fill="none" stroke="#252423" stroke-width="1.2"/></svg>
<svg class="s" style="left:1594px;top:218px;" width="26" height="26" viewBox="0 0 26 26"><circle cx="11" cy="11" r="9.5" fill="none" stroke="#252423" stroke-width="1.3"/><path d="M3,12 L7,9 L11,12 L18,6" fill="none" stroke="#252423" stroke-width="1.1"/><path d="M7,14 V19 M10,14 V20.5 M13,14 V20.5" stroke="#252423" stroke-width="1.1"/><path d="M18,18 L23.5,23.5" stroke="#252423" stroke-width="2.2"/></svg>
<svg class="s" style="left:1451px;top:250px;" width="289" height="11" viewBox="0 0 289 11"><polyline points="0,9.5 16,9.5 23,2.5 30,9.5 179,9.5" fill="none" stroke="#8a8886" stroke-width="1"/><path d="M179,9.5 H289" stroke="#d2d0ce" stroke-width="1"/></svg>
<svg class="s" style="left:1462px;top:273px;" width="18" height="18" viewBox="0 0 18 18"><path d="M0.5,0 V17.5 H18" fill="none" stroke="#252423" stroke-width="1"/><rect x="3" y="2" width="8" height="4" fill="#8cc1ef" stroke="#1e6fbf"/><rect x="0.5" y="2" width="4" height="4" fill="#fff" stroke="#252423" stroke-width="0.8"/><rect x="0.5" y="9.5" width="6" height="4" fill="#fff" stroke="#252423" stroke-width="0.8"/><rect x="6.5" y="9.5" width="9" height="4" fill="#c8c6c4" stroke="#8a8886" stroke-width="0.8"/></svg>
<svg class="s" style="left:1490px;top:273px;" width="18" height="18" viewBox="0 0 18 18"><path d="M0.5,0 V17.5 H18" fill="none" stroke="#252423" stroke-width="1"/><rect x="4" y="5" width="4" height="12.5" fill="#fff" stroke="#252423" stroke-width="0.9"/><rect x="4" y="5" width="4" height="7" fill="#8cc1ef" stroke="#1e6fbf" stroke-width="0.9"/><rect x="11.5" y="2" width="4" height="15.5" fill="#fff" stroke="#252423" stroke-width="0.9"/><rect x="11.5" y="2" width="4" height="6" fill="#c8c6c4" stroke="#8a8886" stroke-width="0.9"/></svg>
<svg class="s" style="left:1518px;top:273px;" width="18" height="18" viewBox="0 0 18 18"><path d="M0.5,0 V18" stroke="#252423"/><rect x="0.5" y="0.5" width="17" height="4" fill="#8cc1ef" stroke="#1e6fbf" stroke-width="1.2"/><rect x="0.5" y="7" width="12" height="3.5" fill="#c8c6c4" stroke="#8a8886"/><rect x="0.5" y="13" width="13" height="4.5" fill="#fff" stroke="#252423"/></svg>
<svg class="s" style="left:1546px;top:273px;" width="18" height="18" viewBox="0 0 18 18"><path d="M0,17.5 H18" stroke="#252423"/><rect x="0.5" y="0.5" width="4" height="17" fill="#8cc1ef" stroke="#1e6fbf" stroke-width="1.2"/><rect x="7" y="8" width="3.5" height="9.5" fill="#fff" stroke="#252423"/><rect x="10.5" y="11" width="3" height="6.5" fill="#c8c6c4" stroke="#8a8886"/><rect x="13.5" y="4.5" width="4" height="13" fill="#fff" stroke="#252423"/></svg>
<svg class="s" style="left:1574px;top:273px;" width="18" height="18" viewBox="0 0 18 18"><path d="M0.5,0 V17.5 H18" fill="none" stroke="#252423" stroke-width="1"/><rect x="0.5" y="2" width="17" height="4" fill="#fff" stroke="#252423" stroke-width="0.8"/><rect x="4" y="2" width="13.5" height="4" fill="#8cc1ef" stroke="#1e6fbf"/><rect x="0.5" y="9.5" width="17" height="4" fill="#fff" stroke="#252423" stroke-width="0.8"/><rect x="12" y="9.5" width="5.5" height="4" fill="#c8c6c4" stroke="#8a8886"/></svg>
<svg class="s" style="left:1602px;top:273px;" width="18" height="18" viewBox="0 0 18 18"><path d="M0.5,0 V17.5 H18" fill="none" stroke="#252423" stroke-width="1"/><rect x="3.5" y="1" width="4" height="16.5" fill="#fff" stroke="#252423"/><rect x="3.5" y="1" width="4" height="12" fill="#8cc1ef" stroke="#1e6fbf"/><rect x="11" y="1" width="4" height="16.5" fill="#fff" stroke="#252423"/><rect x="11" y="1" width="4" height="5" fill="#c8c6c4" stroke="#8a8886"/></svg>
<svg class="s" style="left:1630px;top:273px;" width="18" height="18" viewBox="0 0 18 18"><path d="M0.5,0 V17.5 H18" fill="none" stroke="#252423" stroke-width="1"/><polyline points="1,11 6,5 10,9 13,4 18,8" fill="none" stroke="#252423"/><polyline points="1,14 6,10 10,12 14,6 18,9" fill="none" stroke="#1e6fbf" stroke-width="1.3"/></svg>
<svg class="s" style="left:1658px;top:273px;" width="18" height="18" viewBox="0 0 18 18"><path d="M0,17.5 H18" stroke="#252423"/><path d="M0.5,17.5 V12 L6,2 L10,9 L12,2 L15,7 L17.5,17.5 Z" fill="#c8c6c4" stroke="#252423"/><path d="M0.5,17.5 V14 L4,9 L9,14 L12,8 L17.5,17.5 Z" fill="#8cc1ef" stroke="#1e6fbf"/></svg>
<svg class="s" style="left:1686px;top:273px;" width="18" height="18" viewBox="0 0 18 18"><path d="M0.5,0 V17.5 H18" fill="none" stroke="#252423" stroke-width="1"/><path d="M1,2 L7,10 L12,4 L18,6 V17 H1 Z" fill="#8cc1ef" stroke="#1e6fbf"/><path d="M1,8 L7,14 L12,9 L18,11 V17 H1 Z" fill="#fff"/></svg>
<svg class="s" style="left:1462px;top:301px;" width="18" height="18" viewBox="0 0 18 18"><path d="M0.5,0 V17.5 H18" fill="none" stroke="#252423" stroke-width="1"/><rect x="3.5" y="3" width="4" height="14.5" fill="#8cc1ef" stroke="#1e6fbf"/><rect x="11" y="5" width="4" height="12.5" fill="#c8c6c4" stroke="#8a8886"/><polyline points="1,15 6,9 10,13 17,5" fill="none" stroke="#252423"/></svg>
<svg class="s" style="left:1490px;top:301px;" width="18" height="18" viewBox="0 0 18 18"><path d="M0.5,0 V17.5 H18" fill="none" stroke="#252423" stroke-width="1"/><rect x="3" y="9" width="4" height="8.5" fill="#8cc1ef" stroke="#1e6fbf"/><rect x="7" y="2" width="4" height="15.5" fill="#fff" stroke="#252423"/><rect x="11" y="5" width="4" height="12.5" fill="#c8c6c4" stroke="#8a8886"/><polyline points="1,15 6,9 10,12 17,5" fill="none" stroke="#252423"/></svg>
<svg class="s" style="left:1518px;top:301px;" width="18" height="18" viewBox="0 0 18 18"><path d="M0.5,0 V17.5 H18" fill="none" stroke="#252423" stroke-width="1"/><path d="M2,2 L9,6 L16,2 V9 L9,13 L2,9 Z" fill="#c8c6c4" stroke="#8a8886" stroke-width="0.9"/><path d="M2,8 L9,12 L16,8 V12 L9,16 L2,12 Z" fill="#8cc1ef" stroke="#1e6fbf"/><rect x="2" y="10" width="3" height="3" fill="#e8731e"/><rect x="13" y="10" width="3" height="3" fill="#e8731e"/></svg>
<svg class="s" style="left:1546px;top:301px;" width="18" height="18" viewBox="0 0 18 18"><path d="M0,17.5 H18 M0.5,17.5 V7" stroke="#252423"/><rect x="3.5" y="7" width="3" height="10.5" fill="#fff" stroke="#252423"/><rect x="6.5" y="4" width="3" height="6" fill="#fff" stroke="#252423"/><rect x="9.5" y="1" width="3" height="10" fill="#8cc1ef" stroke="#1e6fbf"/><rect x="13" y="1" width="3.5" height="16.5" fill="#fff" stroke="#252423"/></svg>
<svg class="s" style="left:1574px;top:301px;" width="18" height="18" viewBox="0 0 18 18"><path d="M0.5,1 H17.5 V5 H0.5 Z" fill="#8cc1ef" stroke="#1e6fbf"/><path d="M3,6 H15 V10.5 H3 Z" fill="#8cc1ef" stroke="#1e6fbf"/><path d="M6,11.5 H12 V16.5 H6 Z" fill="#8cc1ef" stroke="#1e6fbf"/></svg>
<svg class="s" style="left:1602px;top:301px;" width="18" height="18" viewBox="0 0 18 18"><path d="M0.5,0 V17.5 H18" fill="none" stroke="#252423" stroke-width="1"/><rect x="3" y="4" width="2" height="2" fill="#8cc1ef"/><rect x="8" y="7" width="2" height="2" fill="#8cc1ef"/><rect x="13" y="11" width="2" height="2" fill="#8cc1ef"/><rect x="13" y="1" width="2" height="2" fill="#252423"/><rect x="3" y="12" width="2" height="2" fill="#252423"/></svg>
<svg class="s" style="left:1630px;top:301px;" width="18" height="18" viewBox="0 0 18 18"><circle cx="9" cy="9" r="8.3" fill="#fafafa" stroke="#252423" stroke-width="1.1"/><path d="M9,0.7 A8.3,8.3 0 0 1 15,14.7 L9,9 Z" fill="#8cc1ef" stroke="#1e6fbf"/></svg>
<div class="r" style="left:1655px;top:298px;width:24px;height:24px;background:#d2d0ce;border:1px solid #a19f9d;"></div>
<svg class="s" style="left:1658px;top:301px;" width="18" height="18" viewBox="0 0 18 18"><circle cx="9" cy="9" r="7.5" fill="none" stroke="#fafafa" stroke-width="4.5"/><path d="M9,1.5 A7.5,7.5 0 1 1 1.5,9" fill="none" stroke="#8cc1ef" stroke-width="4.5"/><circle cx="9" cy="9" r="9.6" fill="none" stroke="#1e6fbf" stroke-width="0.9"/><circle cx="9" cy="9" r="5.3" fill="#c8c6c4" stroke="#1e6fbf" stroke-width="0.9"/></svg>
<svg class="s" style="left:1686px;top:301px;" width="18" height="18" viewBox="0 0 18 18"><rect x="0.5" y="0.5" width="17" height="17" fill="#fff" stroke="#252423"/><rect x="0.5" y="0.5" width="8" height="17" fill="#8cc1ef" stroke="#1e6fbf"/><path d="M1,9 H8" stroke="#fff"/><path d="M8.5,5.5 H17.5 M8.5,11.5 H17.5 M13,5.5 V17.5" stroke="#252423"/></svg>
<svg class="s" style="left:1462px;top:329px;" width="18" height="18" viewBox="0 0 18 18"><circle cx="9" cy="8" r="6" fill="#fff" stroke="#252423"/><path d="M6,4 Q9,6 7,9 Q10,10 8,13 M11,3 Q13,7 14,9" stroke="#2aa147" stroke-width="2.5" fill="none"/><path d="M4,2 A8,8 0 0 0 14,15 M9,15 V17 M4,17.5 H14" fill="none" stroke="#252423"/></svg>
<svg class="s" style="left:1490px;top:329px;" width="18" height="18" viewBox="0 0 18 18"><path d="M1,2 L6,1 L9,3 L14,1 L17,3 V12 L12,17 L8,15 L4,17 L1,12 Z" fill="#c8c6c4" stroke="#252423"/><path d="M1,2 L6,1 L7,8 L1,9 Z" fill="#8cc1ef"/><path d="M10,10 L17,9 V12 L12,17 L9,15 Z" fill="#8cc1ef" stroke="#1e6fbf"/></svg>
<svg class="s" style="left:1518px;top:329px;" width="18" height="18" viewBox="0 0 18 18"><path d="M1,14 A8,8 0 0 1 17,14 H13 A4,4 0 0 0 5,14 Z" fill="#fff" stroke="#252423"/><path d="M9,6 A8,8 0 0 1 17,14 H13 A4,4 0 0 0 9,10 Z" fill="#8cc1ef" stroke="#1e6fbf"/><path d="M8,14 L12,9" stroke="#252423" stroke-width="1.5"/></svg>
<svg class="s" style="left:1546px;top:329px;" width="18" height="18" viewBox="0 0 18 18"><rect x="0.5" y="2" width="17" height="13" fill="#fff" stroke="#252423"/><path d="M2,13 H16" stroke="#8a8886"/><text x="9" y="11" font-size="7.5" text-anchor="middle" fill="#2b88d8" font-family="Liberation Sans">123</text></svg>
<svg class="s" style="left:1574px;top:329px;" width="18" height="18" viewBox="0 0 18 18"><rect x="0.5" y="0.5" width="17" height="17" fill="#fff" stroke="#252423"/><path d="M3,3 V15" stroke="#8a8886"/><path d="M5,5 H14 M5,10 H14" stroke="#1e6fbf" stroke-width="1.6"/><path d="M5,7.5 H10 M5,12.5 H10" stroke="#8a8886"/></svg>
<svg class="s" style="left:1602px;top:329px;" width="18" height="18" viewBox="0 0 18 18"><rect x="0.5" y="2" width="17" height="13" fill="#fff" stroke="#252423"/><path d="M2,12.5 H16" stroke="#252423"/><path d="M3,10 L5,6 L7,10 Z" fill="#7fd18c" stroke="#2aa147" stroke-width="0.8"/><path d="M10,5 L14,5 L12,9 Z" fill="#f07d7d" stroke="#d13438" stroke-width="0.8"/></svg>
<svg class="s" style="left:1630px;top:329px;" width="18" height="18" viewBox="0 0 18 18"><rect x="0.5" y="0.5" width="17" height="17" fill="#fff" stroke="#252423"/><rect x="0.5" y="0.5" width="17" height="3" fill="#c8c6c4" stroke="#252423"/><rect x="3" y="6" width="3" height="3" fill="#c8c6c4" stroke="#8a8886" stroke-width="0.8"/><rect x="3" y="11" width="3" height="3" fill="#c8c6c4" stroke="#8a8886" stroke-width="0.8"/><path d="M9,10 H18 L14.5,14 V18 H12.5 V14 Z" fill="#fff" stroke="#252423"/></svg>
<svg class="s" style="left:1658px;top:329px;" width="18" height="18" viewBox="0 0 18 18"><rect x="0.5" y="0.5" width="17" height="17" fill="#fff" stroke="#252423"/><rect x="0.5" y="0.5" width="17" height="3" fill="#c8c6c4" stroke="#252423"/><path d="M0.5,8 H17.5 M0.5,12.7 H17.5 M6,3.5 V17.5 M11.8,3.5 V17.5" stroke="#252423"/></svg>
<svg class="s" style="left:1686px;top:329px;" width="18" height="18" viewBox="0 0 18 18"><rect x="0.5" y="0.5" width="17" height="17" fill="#fff" stroke="#252423"/><rect x="0.5" y="0.5" width="17" height="3" fill="#c8c6c4" stroke="#252423"/><rect x="11.8" y="3.5" width="5.7" height="14" fill="#8cc1ef"/><rect x="0.5" y="12.7" width="17" height="4.8" fill="#8cc1ef"/><path d="M0.5,8 H17.5 M0.5,12.7 H17.5 M6,3.5 V17.5 M11.8,3.5 V17.5" stroke="#1e6fbf"/></svg>
<svg class="s" style="left:1462px;top:357px;" width="18" height="18" viewBox="0 0 18 18"><text x="8.5" y="13.5" font-size="15" font-weight="bold" text-anchor="middle" fill="#2b7cd3" font-family="Liberation Sans">R</text></svg>
<svg class="s" style="left:1490px;top:357px;" width="18" height="18" viewBox="0 0 18 18"><text x="8.5" y="12.5" font-size="15" font-weight="bold" text-anchor="middle" fill="#2b7cd3" font-family="Liberation Sans" textLength="18" lengthAdjust="spacingAndGlyphs">Py</text></svg>
<svg class="s" style="left:1518px;top:357px;" width="18" height="18" viewBox="0 0 18 18"><path d="M0.5,0 V17.5 H18" fill="none" stroke="#252423" stroke-width="1"/><path d="M1,4 H13 M1,9 H9 M1,13 H6" stroke="#1e6fbf"/><circle cx="15" cy="4" r="2.5" fill="#8cc1ef" stroke="#1e6fbf"/><rect x="9" y="7.5" width="3" height="3" fill="#fff" stroke="#8a8886" stroke-width="0.8"/><rect x="6" y="11.5" width="3" height="3" fill="#fff" stroke="#8a8886" stroke-width="0.8"/></svg>
<svg class="s" style="left:1546px;top:357px;" width="18" height="18" viewBox="0 0 18 18"><rect x="0.5" y="7" width="6" height="4" fill="#8cc1ef" stroke="#1e6fbf"/><rect x="11" y="1" width="6.5" height="4" fill="#8cc1ef" stroke="#1e6fbf"/><rect x="11" y="7" width="6.5" height="4" fill="#8cc1ef" stroke="#1e6fbf"/><rect x="11" y="13" width="6.5" height="4" fill="#8cc1ef" stroke="#1e6fbf"/><path d="M6.5,9 H11 M9,3 V15 M9,3 H11 M9,15 H11" fill="none" stroke="#252423"/></svg>
<svg class="s" style="left:1574px;top:357px;" width="18" height="18" viewBox="0 0 18 18"><path d="M0.5,1.5 H17.5 V12.5 H6 L2.5,17 V12.5 H0.5 Z" fill="#fff" stroke="#1e6fbf" stroke-width="1.1"/></svg>
<svg class="s" style="left:1602px;top:357px;" width="18" height="18" viewBox="0 0 18 18"><path d="M3,0.5 H12 L16.5,5 V17.5 H3 V12" fill="#fff" stroke="#252423"/><path d="M12,0.5 V5 H16.5" fill="none" stroke="#252423"/><circle cx="2.5" cy="8" r="1.7" fill="#fff" stroke="#1e6fbf"/><path d="M6,8.5 H12 M6,11.5 H10" stroke="#1e6fbf"/></svg>
<svg class="s" style="left:1630px;top:357px;" width="18" height="18" viewBox="0 0 18 18"><path d="M4,1.5 H14 V7 Q14,12 9,12 Q4,12 4,7 Z" fill="#fff" stroke="#252423"/><path d="M4,3 H1 V6 Q1,9 4,9 M14,3 H17 V6 Q17,9 14,9" fill="none" stroke="#252423"/><path d="M4,1.5 H14" stroke="#1e6fbf" stroke-width="2"/><path d="M9,12 V14 M5,17 L7,14 H11 L13,17 Z" fill="#8cc1ef" stroke="#1e6fbf"/></svg>
<svg class="s" style="left:1658px;top:357px;" width="18" height="18" viewBox="0 0 18 18"><path d="M1.5,0.5 H11 L16.5,6 V18.5 H1.5 Z" fill="#fff" stroke="#252423" stroke-width="1.2"/><path d="M11,0.5 V6 H16.5" fill="none" stroke="#252423"/><path d="M4.5,15 V13 M8,15 V10 M11.5,15 V8" stroke="#252423" stroke-width="2"/></svg>
<svg class="s" style="left:1686px;top:357px;" width="18" height="18" viewBox="0 0 18 18"><rect x="1.5" y="1.5" width="15" height="15" fill="#fff" stroke="#1e6fbf" stroke-width="1.2"/><path d="M7,16 Q8,10 12,9 Q14,6 16,4 V13 Q12,14 10,16 Z" fill="#8cc1ef"/><path d="M0,0 H5 V6 L2.5,9 L0,6 Z" fill="#d9730d"/><circle cx="2.5" cy="3" r="1" fill="#fff"/><circle cx="15" cy="15" r="2.7" fill="#d9730d"/><rect x="16" y="9" width="2.5" height="2.5" fill="#d9730d"/></svg>
<svg class="s" style="left:1462px;top:385px;" width="18" height="18" viewBox="0 0 18 18"><path d="M8,1 L16.5,9 L8,17 L0.5,9 Z" fill="#fafafa" stroke="#a349a4" stroke-width="1.2"/><path d="M10.5,0.8 L18,9 L10.5,17 M4.5,5 L12.5,13 M12.5,5 L4.5,13" fill="none" stroke="#a349a4" stroke-width="1.1"/></svg>
<svg class="s" style="left:1490px;top:385px;" width="18" height="18" viewBox="0 0 18 18"><path d="M0.5,1 H11 L17.5,8.5 L11,16 H0.5 L6.5,8.5 Z" fill="#fafafa" stroke="#1e7ad6" stroke-width="1.2"/><path d="M6.5,16 L14,7 M10.5,16 L16,9.5" stroke="#1e7ad6" stroke-width="1.1"/></svg>
<div class="r" style="left:1520px;top:392.5px;width:1.6px;height:1.6px;background:#484644;"></div>
<div class="r" style="left:1526px;top:392.5px;width:1.6px;height:1.6px;background:#484644;"></div>
<div class="r" style="left:1532px;top:392.5px;width:1.6px;height:1.6px;background:#484644;"></div>
<div class="r" style="left:1451px;top:414px;width:288px;height:1px;background:#e1dfdd;"></div>
<div class="t" style="left:1463.00px;top:426px;font-size:12px;color:#323130;">Условные обозначения</div>
<div class="r" style="left:1455px;top:445px;width:278px;height:28px;background:#ffffff;border:1px dashed #c8c6c4;"></div>
<div class="t" style="left:1466.00px;top:454px;font-size:12px;color:#323130;transform:scaleX(0.9908);">Добавьте сюда поля с данными</div>
<div class="t" style="left:1463.00px;top:485px;font-size:12px;color:#323130;transform:scaleX(0.9811);">Значения</div>
<div class="r" style="left:1455px;top:505px;width:278px;height:62px;background:#ffffff;border:1px dashed #c8c6c4;"></div>
<div class="r" style="left:1458px;top:509px;width:272px;height:23px;background:#e9e8e7;border:1px solid #c8c6c4;border-radius:2px;"></div>
<div class="t" style="left:1463.00px;top:515px;font-size:12px;color:#252423;transform:scaleX(0.8990);">Сумма REVENUE</div>
<svg class="s" style="left:1698px;top:516px;" width="14" height="9" viewBox="0 0 14 9"><polyline points="1,1 7,7.5 13,1" fill="none" stroke="#605e5c" stroke-width="1.1"/></svg>
<svg class="s" style="left:1715px;top:515px;" width="11" height="11" viewBox="0 0 11 11"><path d="M1,1 L10,10 M10,1 L1,10" stroke="#484644" stroke-width="0.9"/></svg>
<div class="r" style="left:1458px;top:534px;width:272px;height:23px;background:#e9e8e7;border:1px solid #c8c6c4;border-radius:2px;"></div>
<div class="t" style="left:1463.00px;top:540px;font-size:12px;color:#252423;transform:scaleX(0.9045);">Сумма QUARTER</div>
<svg class="s" style="left:1698px;top:541px;" width="14" height="9" viewBox="0 0 14 9"><polyline points="1,1 7,7.5 13,1" fill="none" stroke="#605e5c" stroke-width="1.1"/></svg>
<svg class="s" style="left:1715px;top:540px;" width="11" height="11" viewBox="0 0 11 11"><path d="M1,1 L10,10 M10,1 L1,10" stroke="#484644" stroke-width="0.9"/></svg>
<div class="t" style="left:1463.00px;top:580px;font-size:12px;color:#323130;transform:scaleX(1.0120);">Подробнее</div>
<div class="r" style="left:1455px;top:599px;width:278px;height:28px;background:#ffffff;border:1px dashed #c8c6c4;"></div>
<div class="t" style="left:1466.00px;top:608px;font-size:12px;color:#323130;transform:scaleX(0.9908);">Добавьте сюда поля с данными</div>
<div class="t" style="left:1463.00px;top:640px;font-size:12px;color:#323130;transform:scaleX(0.9913);">Подсказки</div>
<div class="r" style="left:1455px;top:659px;width:278px;height:28px;background:#ffffff;border:1px dashed #c8c6c4;"></div>
<div class="t" style="left:1466.00px;top:668px;font-size:12px;color:#323130;transform:scaleX(0.9908);">Добавьте сюда поля с данными</div>
<div class="t" style="left:1463.00px;top:700px;font-size:12px;color:#323130;transform:scaleX(1.0086);-webkit-text-stroke:0.15px #323130;">Детализация</div>
<div class="t" style="left:1463.00px;top:725px;font-size:12px;color:#323130;">Несколько отчетов</div>
<div class="r" style="left:1701px;top:723px;width:32px;height:16px;background:#ffffff;border:1px solid #605e5c;border-radius:8px;"></div>
<div class="r" style="left:1706px;top:727.5px;width:7px;height:7px;border-radius:50%;background:#605e5c"></div>
<div class="t" style="left:1463.00px;top:752px;font-size:12px;color:#323130;transform:scaleX(0.9639);">Сохранить все фильтры</div>
<div class="r" style="left:1701px;top:749px;width:32px;height:16px;background:#605e5c;border-radius:8px;"></div>
<svg class="s" style="left:1706px;top:752px;" width="10" height="9" viewBox="0 0 10 9"><polyline points="1.5,4.5 4,7 8.5,1.5" fill="none" stroke="#fff" stroke-width="1.6"/></svg>
<div class="r" style="left:1720px;top:753.5px;width:8px;height:8px;border-radius:50%;background:#ffffff"></div>
<div class="r" style="left:1455px;top:776px;width:278px;height:26px;background:#ffffff;border:1px dashed #c8c6c4;"></div>
<div class="t" style="left:1464.00px;top:784px;font-size:12px;color:#323130;transform:scaleX(0.9827);">Добавьте сюда поля детализации</div>
<div class="r" style="left:1740px;top:158px;width:179px;height:844px;background:#f3f2f1;"></div>
<div class="t" style="left:1748.30px;top:170px;font-size:15px;color:#252423;transform:scaleX(1.0667);-webkit-text-stroke:0.55px #252423;">Поля</div>
<svg class="s" style="left:1899px;top:170px;" width="15" height="14" viewBox="0 0 15 14"><polyline points="1.5,1.5 6.5,7 1.5,12.5" fill="none" stroke="#252423" stroke-width="1.3"/><polyline points="7.5,1.5 12.5,7 7.5,12.5" fill="none" stroke="#252423" stroke-width="1.3"/></svg>
<div class="r" style="left:1744px;top:203px;width:172px;height:27px;background:#ffffff;border:1px solid #8a8886;border-radius:2px;"></div>
<svg class="s" style="left:1751px;top:208px;" width="17" height="17" viewBox="0 0 17 17"><circle cx="10.5" cy="6.5" r="4.8" fill="none" stroke="#252423" stroke-width="1.1"/><path d="M7,10 L1.5,15.5" stroke="#252423" stroke-width="1.1"/></svg>
<div class="t" style="left:1773.00px;top:211px;font-size:13px;color:#323130;transform:scaleX(1.1034);">Поиск</div>
<svg class="s" style="left:1749px;top:245px;" width="8" height="12" viewBox="0 0 8 12"><polyline points="1,1 6,6 1,11" fill="none" stroke="#605e5c" stroke-width="1.1"/></svg>
<svg class="s" style="left:1762px;top:245px;" width="14" height="13" viewBox="0 0 14 13"><rect x="0.5" y="0.5" width="12.5" height="11.5" fill="none" stroke="#252423" stroke-width="1.1"/><path d="M0.5,2.5 H13 M0.5,5.5 H13 M0.5,8.7 H13 M4.7,2.5 V12 M8.8,2.5 V12" stroke="#252423" stroke-width="1"/></svg>
<div class="t" style="left:1781.00px;top:246px;font-size:12px;color:#323130;transform:scaleX(0.9536);">Каталог</div>
<svg class="s" style="left:1749px;top:269px;" width="8" height="12" viewBox="0 0 8 12"><polyline points="1,1 6,6 1,11" fill="none" stroke="#605e5c" stroke-width="1.1"/></svg>
<svg class="s" style="left:1762px;top:269px;" width="14" height="13" viewBox="0 0 14 13"><rect x="0.5" y="0.5" width="12.5" height="11.5" fill="none" stroke="#252423" stroke-width="1.1"/><path d="M0.5,2.5 H13 M0.5,5.5 H13 M0.5,8.7 H13 M4.7,2.5 V12 M8.8,2.5 V12" stroke="#252423" stroke-width="1"/></svg>
<div class="t" style="left:1781.00px;top:270px;font-size:12px;color:#323130;transform:scaleX(0.9477);">Каталог (2)</div>
<svg class="s" style="left:1749px;top:293px;" width="8" height="12" viewBox="0 0 8 12"><polyline points="1,1 6,6 1,11" fill="none" stroke="#605e5c" stroke-width="1.1"/></svg>
<svg class="s" style="left:1762px;top:293px;" width="14" height="13" viewBox="0 0 14 13"><rect x="0.5" y="0.5" width="12.5" height="11.5" fill="none" stroke="#252423" stroke-width="1.1"/><path d="M0.5,2.5 H13 M0.5,5.5 H13 M0.5,8.7 H13 M4.7,2.5 V12 M8.8,2.5 V12" stroke="#252423" stroke-width="1"/></svg>
<div class="t" style="left:1781.00px;top:294px;font-size:12px;color:#323130;transform:scaleX(0.9294);">О Нас</div>
<svg class="s" style="left:1749px;top:317px;" width="8" height="12" viewBox="0 0 8 12"><polyline points="1,1 6,6 1,11" fill="none" stroke="#605e5c" stroke-width="1.1"/></svg>
<svg class="s" style="left:1762px;top:317px;" width="14" height="13" viewBox="0 0 14 13"><rect x="0.5" y="0.5" width="12.5" height="11.5" fill="none" stroke="#252423" stroke-width="1.1"/><path d="M0.5,2.5 H13 M0.5,5.5 H13 M0.5,8.7 H13 M4.7,2.5 V12 M8.8,2.5 V12" stroke="#252423" stroke-width="1"/></svg>
<div class="t" style="left:1781.00px;top:318px;font-size:12px;color:#323130;transform:scaleX(0.9761);">Шаблон для поставщи...</div>
<svg class="s" style="left:1749px;top:341px;" width="8" height="12" viewBox="0 0 8 12"><polyline points="1,1 6,6 1,11" fill="none" stroke="#605e5c" stroke-width="1.1"/></svg>
<svg class="s" style="left:1762px;top:341px;" width="14" height="13" viewBox="0 0 14 13"><rect x="0.5" y="0.5" width="12.5" height="11.5" fill="none" stroke="#252423" stroke-width="1.1"/><path d="M0.5,2.5 H13 M0.5,5.5 H13 M0.5,8.7 H13 M4.7,2.5 V12 M8.8,2.5 V12" stroke="#252423" stroke-width="1"/></svg>
<div class="t" style="left:1781.00px;top:342px;font-size:12px;color:#323130;transform:scaleX(0.9761);">Шаблон для поставщи...</div>
<svg class="s" style="left:1749px;top:365px;" width="8" height="12" viewBox="0 0 8 12"><polyline points="1,1 6,6 1,11" fill="none" stroke="#605e5c" stroke-width="1.1"/></svg>
<svg class="s" style="left:1762px;top:365px;" width="14" height="13" viewBox="0 0 14 13"><rect x="0.5" y="0.5" width="12.5" height="11.5" fill="none" stroke="#252423" stroke-width="1.1"/><path d="M0.5,2.5 H13 M0.5,5.5 H13 M0.5,8.7 H13 M4.7,2.5 V12 M8.8,2.5 V12" stroke="#252423" stroke-width="1"/></svg>
<div class="t" style="left:1781.00px;top:366px;font-size:12px;color:#323130;transform:scaleX(0.9915);">tblData</div>
<svg class="s" style="left:1746px;top:391px;" width="13" height="8" viewBox="0 0 13 8"><polyline points="1,1 6.5,6.5 12,1" fill="none" stroke="#605e5c" stroke-width="1.1"/></svg>
<svg class="s" style="left:1762px;top:389px;" width="14" height="13" viewBox="0 0 14 13"><rect x="0.5" y="0.5" width="12.5" height="11.5" fill="none" stroke="#252423" stroke-width="1.1"/><path d="M0.5,2.5 H13 M0.5,5.5 H13 M0.5,8.7 H13 M4.7,2.5 V12 M8.8,2.5 V12" stroke="#252423" stroke-width="1"/></svg>
<div class="t" style="left:1781.00px;top:390px;font-size:12px;color:#323130;transform:scaleX(0.9875);">tblData (2)</div>
<div class="r" style="left:1769px;top:395px;width:12px;height:12px;border-radius:50%;background:#117865;border:1px solid #f3f2f1;"></div>
<svg class="s" style="left:1771px;top:398px;" width="8" height="7" viewBox="0 0 8 7"><polyline points="1,3.5 3,5.5 7,1.5" fill="none" stroke="#fff" stroke-width="1.3"/></svg>
<div class="r" style="left:1778px;top:413px;width:12px;height:12px;background:transparent;border:1px solid #8a8886;border-radius:2px;"></div>
<svg class="s" style="left:1799px;top:412px;" width="11" height="14" viewBox="0 0 11 14"><path d="M9.5,1 H1 L6,7 L1,13 H9.5" fill="none" stroke="#252423" stroke-width="1.1"/></svg>
<div class="t" style="left:1816.30px;top:414px;font-size:12px;color:#323130;transform:scaleX(0.9615);">AMOUNT</div>
<div class="r" style="left:1778px;top:437px;width:12px;height:12px;background:transparent;border:1px solid #8a8886;border-radius:2px;"></div>
<div class="t" style="left:1816.30px;top:438px;font-size:12px;color:#323130;transform:scaleX(0.9339);">COMPANY</div>
<div class="r" style="left:1778px;top:461px;width:12px;height:12px;background:transparent;border:1px solid #8a8886;border-radius:2px;"></div>
<svg class="s" style="left:1799px;top:460px;" width="11" height="14" viewBox="0 0 11 14"><path d="M9.5,1 H1 L6,7 L1,13 H9.5" fill="none" stroke="#252423" stroke-width="1.1"/></svg>
<div class="t" style="left:1816.30px;top:462px;font-size:12px;color:#323130;transform:scaleX(0.8390);">COST</div>
<div class="r" style="left:1778px;top:485px;width:12px;height:12px;background:transparent;border:1px solid #8a8886;border-radius:2px;"></div>
<svg class="s" style="left:1764px;top:485px;" width="8" height="12" viewBox="0 0 8 12"><polyline points="1,1 6,6 1,11" fill="none" stroke="#605e5c" stroke-width="1.1"/></svg>
<svg class="s" style="left:1796px;top:483px;" width="16" height="16" viewBox="0 0 16 16"><rect x="0.8" y="1.5" width="14.5" height="13.5" fill="none" stroke="#252423" stroke-width="1.1"/><path d="M0.8,4.5 H15.3 M4,0 V2.5 M12,0 V2.5" stroke="#252423" stroke-width="1.1"/><rect x="3.5" y="7.0" width="1" height="1" fill="#252423"/><rect x="3.5" y="9.8" width="1" height="1" fill="#252423"/><rect x="3.5" y="12.6" width="1" height="1" fill="#252423"/><rect x="6.5" y="7.0" width="1" height="1" fill="#252423"/><rect x="6.5" y="9.8" width="1" height="1" fill="#252423"/><rect x="6.5" y="12.6" width="1" height="1" fill="#252423"/><rect x="9.5" y="7.0" width="1" height="1" fill="#252423"/><rect x="9.5" y="9.8" width="1" height="1" fill="#252423"/><rect x="9.5" y="12.6" width="1" height="1" fill="#252423"/><rect x="12.5" y="7.0" width="1" height="1" fill="#252423"/><rect x="12.5" y="9.8" width="1" height="1" fill="#252423"/><rect x="12.5" y="12.6" width="1" height="1" fill="#252423"/></svg>
<div class="t" style="left:1816.30px;top:486px;font-size:12px;color:#323130;transform:scaleX(0.8578);">DATE</div>
<div class="r" style="left:1778px;top:509px;width:12px;height:12px;background:transparent;border:1px solid #8a8886;border-radius:2px;"></div>
<svg class="s" style="left:1799px;top:508px;" width="11" height="14" viewBox="0 0 11 14"><path d="M9.5,1 H1 L6,7 L1,13 H9.5" fill="none" stroke="#252423" stroke-width="1.1"/></svg>
<div class="t" style="left:1816.30px;top:510px;font-size:12px;color:#323130;transform:scaleX(0.9773);">MONTH</div>
<div class="r" style="left:1778px;top:533px;width:12px;height:12px;background:transparent;border:1px solid #8a8886;border-radius:2px;"></div>
<svg class="s" style="left:1799px;top:532px;" width="11" height="14" viewBox="0 0 11 14"><path d="M9.5,1 H1 L6,7 L1,13 H9.5" fill="none" stroke="#252423" stroke-width="1.1"/></svg>
<div class="t" style="left:1816.30px;top:534px;font-size:12px;color:#323130;transform:scaleX(0.9773);">MONTH</div>
<div class="r" style="left:1778px;top:557px;width:12px;height:12px;background:transparent;border:1px solid #8a8886;border-radius:2px;"></div>
<svg class="s" style="left:1799px;top:556px;" width="11" height="14" viewBox="0 0 11 14"><path d="M9.5,1 H1 L6,7 L1,13 H9.5" fill="none" stroke="#252423" stroke-width="1.1"/></svg>
<div class="t" style="left:1816.30px;top:558px;font-size:12px;color:#323130;transform:scaleX(0.9773);">MONTH</div>
<div class="r" style="left:1778px;top:581px;width:12px;height:12px;background:transparent;border:1px solid #8a8886;border-radius:2px;"></div>
<svg class="s" style="left:1799px;top:580px;" width="11" height="14" viewBox="0 0 11 14"><path d="M9.5,1 H1 L6,7 L1,13 H9.5" fill="none" stroke="#252423" stroke-width="1.1"/></svg>
<div class="t" style="left:1816.30px;top:582px;font-size:12px;color:#323130;transform:scaleX(0.9783);">MONTH NUM (...</div>
<div class="r" style="left:1778px;top:605px;width:12px;height:12px;background:transparent;border:1px solid #8a8886;border-radius:2px;"></div>
<svg class="s" style="left:1799px;top:604px;" width="11" height="14" viewBox="0 0 11 14"><path d="M9.5,1 H1 L6,7 L1,13 H9.5" fill="none" stroke="#252423" stroke-width="1.1"/></svg>
<div class="t" style="left:1816.30px;top:606px;font-size:12px;color:#323130;transform:scaleX(0.9183);">PLANNED</div>
<div class="r" style="left:1778px;top:629px;width:12px;height:12px;background:transparent;border:1px solid #8a8886;border-radius:2px;"></div>
<svg class="s" style="left:1799px;top:628px;" width="11" height="14" viewBox="0 0 11 14"><path d="M9.5,1 H1 L6,7 L1,13 H9.5" fill="none" stroke="#252423" stroke-width="1.1"/></svg>
<div class="t" style="left:1816.30px;top:630px;font-size:12px;color:#323130;transform:scaleX(0.8632);">QUARTER</div>
<div class="r" style="left:1778px;top:653px;width:12px;height:12px;background:#117865;border-radius:2px;"></div>
<svg class="s" style="left:1779px;top:654px;" width="10" height="10" viewBox="0 0 10 10"><polyline points="2,5 4.3,7.3 8.3,2.8" fill="none" stroke="#fff" stroke-width="1.2"/></svg>
<svg class="s" style="left:1799px;top:652px;" width="11" height="14" viewBox="0 0 11 14"><path d="M9.5,1 H1 L6,7 L1,13 H9.5" fill="none" stroke="#252423" stroke-width="1.1"/></svg>
<div class="t" style="left:1816.30px;top:654px;font-size:12px;color:#323130;transform:scaleX(0.8632);">QUARTER</div>
<div class="r" style="left:1778px;top:677px;width:12px;height:12px;background:transparent;border:1px solid #8a8886;border-radius:2px;"></div>
<svg class="s" style="left:1799px;top:676px;" width="11" height="14" viewBox="0 0 11 14"><path d="M9.5,1 H1 L6,7 L1,13 H9.5" fill="none" stroke="#252423" stroke-width="1.1"/></svg>
<div class="t" style="left:1816.30px;top:678px;font-size:12px;color:#323130;transform:scaleX(0.8632);">QUARTER</div>
<div class="r" style="left:1778px;top:701px;width:12px;height:12px;background:#117865;border-radius:2px;"></div>
<svg class="s" style="left:1779px;top:702px;" width="10" height="10" viewBox="0 0 10 10"><polyline points="2,5 4.3,7.3 8.3,2.8" fill="none" stroke="#fff" stroke-width="1.2"/></svg>
<svg class="s" style="left:1799px;top:700px;" width="11" height="14" viewBox="0 0 11 14"><path d="M9.5,1 H1 L6,7 L1,13 H9.5" fill="none" stroke="#252423" stroke-width="1.1"/></svg>
<div class="t" style="left:1816.30px;top:702px;font-size:12px;color:#323130;transform:scaleX(0.8552);">REVENUE</div>
<div class="r" style="left:1778px;top:725px;width:12px;height:12px;background:transparent;border:1px solid #8a8886;border-radius:2px;"></div>
<svg class="s" style="left:1799px;top:724px;" width="11" height="14" viewBox="0 0 11 14"><path d="M9.5,1 H1 L6,7 L1,13 H9.5" fill="none" stroke="#252423" stroke-width="1.1"/></svg>
<div class="t" style="left:1816.30px;top:726px;font-size:12px;color:#323130;transform:scaleX(0.8429);">YEAR</div>
<div class="r" style="left:1778px;top:749px;width:12px;height:12px;background:transparent;border:1px solid #8a8886;border-radius:2px;"></div>
<svg class="s" style="left:1799px;top:748px;" width="11" height="14" viewBox="0 0 11 14"><path d="M9.5,1 H1 L6,7 L1,13 H9.5" fill="none" stroke="#252423" stroke-width="1.1"/></svg>
<div class="t" style="left:1816.30px;top:750px;font-size:12px;color:#323130;transform:scaleX(0.8429);">YEAR</div>
<div class="r" style="left:1778px;top:773px;width:12px;height:12px;background:transparent;border:1px solid #8a8886;border-radius:2px;"></div>
<svg class="s" style="left:1799px;top:772px;" width="11" height="14" viewBox="0 0 11 14"><path d="M9.5,1 H1 L6,7 L1,13 H9.5" fill="none" stroke="#252423" stroke-width="1.1"/></svg>
<div class="t" style="left:1816.30px;top:774px;font-size:12px;color:#323130;transform:scaleX(0.8387);">YEARLY</div>
</body></html>
